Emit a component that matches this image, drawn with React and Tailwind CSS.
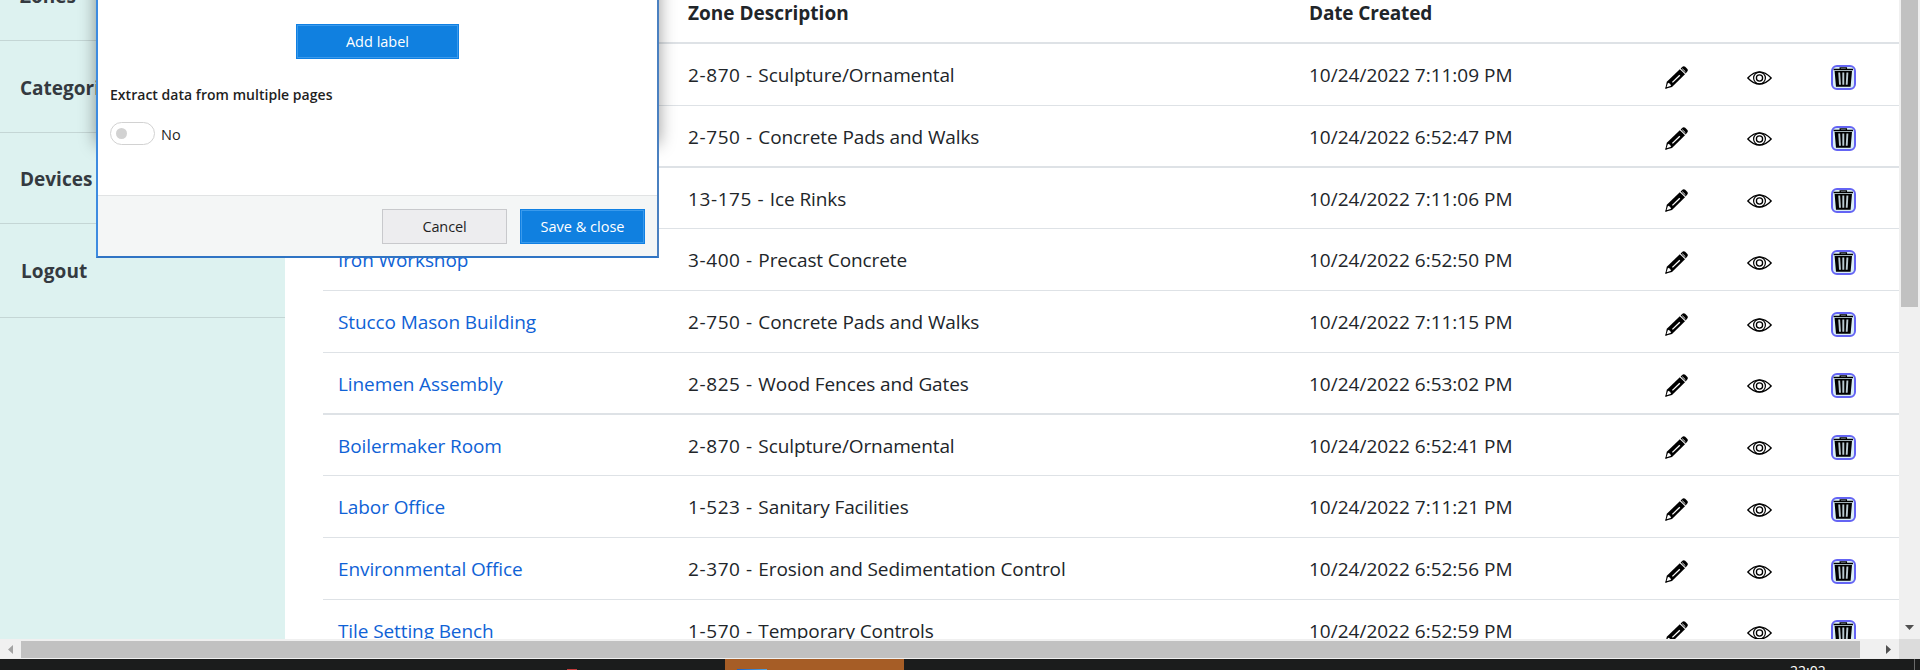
const rows = [
  { name: '', code: '2-870 - ', desc: 'Sculpture/Ornamental', date: '10/24/2022 7:11:09 PM', h: 'h-[62px] border-b', icons: 'mt-0' },
  { name: '', code: '2-750 - ', desc: 'Concrete Pads and Walks', date: '10/24/2022 6:52:47 PM', h: 'h-[62px] border-b-2', icons: '-mt-px' },
  { name: '', code: '13-175 - ', desc: 'Ice Rinks', date: '10/24/2022 7:11:06 PM', h: 'h-[61px] border-b', icons: '-mt-px' },
  { name: 'Iron Workshop', code: '3-400 - ', desc: 'Precast Concrete', date: '10/24/2022 6:52:50 PM', h: 'h-[62px] border-b', icons: 'mt-0' },
  { name: 'Stucco Mason Building', code: '2-750 - ', desc: 'Concrete Pads and Walks', date: '10/24/2022 7:11:15 PM', h: 'h-[62px] border-b', icons: 'mt-0' },
  { name: 'Linemen Assembly', code: '2-825 - ', desc: 'Wood Fences and Gates', date: '10/24/2022 6:53:02 PM', h: 'h-[62px] border-b-2', icons: '-mt-px' },
  { name: 'Boilermaker Room', code: '2-870 - ', desc: 'Sculpture/Ornamental', date: '10/24/2022 6:52:41 PM', h: 'h-[61px] border-b', icons: '-mt-px' },
  { name: 'Labor Office', code: '1-523 - ', desc: 'Sanitary Facilities', date: '10/24/2022 7:11:21 PM', h: 'h-[62px] border-b', icons: 'mt-0' },
  { name: 'Environmental Office', code: '2-370 - ', desc: 'Erosion and Sedimentation Control', date: '10/24/2022 6:52:56 PM', h: 'h-[62px] border-b', icons: 'mt-0' },
  { name: 'Tile Setting Bench', code: '1-570 - ', desc: 'Temporary Controls', date: '10/24/2022 6:52:59 PM', h: 'h-[62px] border-b', icons: '-mt-px' },
];

function Pencil() {
  return (
    <svg width="23" height="23" viewBox="0 0 23 23">
      <path d="M0.3 22.7 L1.8 15.8 L14.8 3.2 L20 8.2 L7 21 Z" fill="#000" />
      <path d="M15.6 2.6 L17.8 0.6 Q19 -0.2 20.2 0.8 L22.4 3.1 Q23.2 4.2 22.4 5.3 L20.7 7.4 Z" fill="#000" />
      <path d="M1.5 21.3 L3 16.8 Q5.6 17.2 6.1 19.8 Z" fill="#fff" />
      <path d="M0.3 22.7 L1 20.4 L2.5 22 Z" fill="#000" />
      <path d="M7.4 16.4 L14.8 9.2" stroke="#fff" strokeWidth="1.3" />
      <path d="M17.2 2.7 L20.4 5.8" stroke="#fff" strokeWidth="0.9" />
    </svg>
  );
}

function Eye() {
  return (
    <svg width="25" height="14" viewBox="0 0 25 14" fill="none" stroke="#000">
      <path d="M0.8 7 Q12.5 -5.4 24.2 7 Q12.5 19.4 0.8 7Z" strokeWidth="1.3" />
      <circle cx="12.5" cy="7" r="5.9" strokeWidth="1.2" />
      <circle cx="12.5" cy="7" r="3.1" strokeWidth="1.3" />
    </svg>
  );
}

function Trash() {
  return (
    <span className="block h-[25px] w-[25px] rounded-[6px] border-2 border-[#6464f4] bg-[#d9edf5]">
      <svg width="21" height="21" viewBox="0 0 21 21">
        <path d="M7.2 2.2 V0.9 H13.4 V2.2" fill="none" stroke="#000" strokeWidth="1.3" />
        <path d="M0.6 1.8 H20 V3.3 H0.6Z M1.6 4 H19 L17.6 19.8 H3Z" fill="#000" />
        <path d="M6.2 5.5 L7 17.8 M10.3 5.5 V17.8 M14.4 5.5 L13.7 17.8" stroke="#b9c9d0" strokeWidth="1.9" />
      </svg>
    </span>
  );
}

function Sidebar() {
  return (
    <nav className="w-[285px] shrink-0 bg-[#ddf2f0] text-[19px] leading-6 font-bold text-[#343a40]">
      <div className="flex h-[41px] border-b border-[#c4d6d5] pl-5"><span className="-mt-4">Zones</span></div>
      <div className="flex h-[92px] items-center border-b border-[#c4d6d5] pt-[2px] pl-5">Categories</div>
      <div className="flex h-[91px] items-center border-b border-[#c4d6d5] pt-[2px] pl-5">Devices</div>
      <div className="flex h-[94px] items-center border-b border-[#c4d6d5] pl-[21px] tracking-[0.1px]">Logout</div>
    </nav>
  );
}

function ZoneTable() {
  return (
    <main className="w-[1614px] shrink-0 overflow-hidden pl-[38px] text-[19px] leading-6 text-[#212529]">
      <div className="flex h-11 border-b-2 border-[#dee2e6] pt-px font-bold">
        <div className="w-[365px] shrink-0" />
        <div className="w-[621px] shrink-0">Zone Description</div>
        <div className="tracking-[-0.15px]">Date Created</div>
      </div>
      {rows.map((r, i) => (
        <div key={i} className={`flex items-start border-[#dee2e6] pt-[19px] ${r.h}`}>
          <div className="w-[365px] shrink-0 pl-[15px] tracking-[-0.1px] text-[#0f62d6]">{r.name}</div>
          <div className="w-[621px] shrink-0 tracking-[-0.1px] whitespace-pre"><span className="tracking-[0.6px]">{r.code}</span>{r.desc}</div>
          <div className="w-[356px] shrink-0">{r.date}</div>
          <div className={`flex ${r.icons}`}>
            <div className="w-[82px] shrink-0 pt-[3px]"><Pencil /></div>
            <div className="w-[84px] shrink-0 pt-[8px]"><Eye /></div>
            <div className="shrink-0 pt-[2px]"><Trash /></div>
          </div>
        </div>
      ))}
    </main>
  );
}

function Dialog() {
  return (
    <div className="absolute top-0 left-24 h-[258px] w-[563px]">
      <div className="absolute -top-5 left-0 h-[164px] w-full shadow-[0_0_16px_rgba(0,0,0,0.4)]" />
      <div className="relative flex h-full flex-col border-x-2 border-b-2 border-r-[#4a80c0] border-b-[#2f74c4] border-l-[#3d8be0] bg-white text-[14.5px] text-[#1f1f1f]">
        <div className="flex h-[195px] flex-col">
          <button className="mt-6 ml-[198px] h-[35px] w-[163px] shrink-0 border border-[#1080e3] bg-[#1080e0] text-white outline-1 -outline-offset-2 outline-[#3a9aec]">Add label</button>
          <div className="mt-[26px] ml-3 text-[14px] leading-5 font-semibold tracking-[0.03px]">Extract data from multiple pages</div>
          <div className="mt-[17px] ml-3 flex items-center gap-[6px]">
            <span className="flex h-[23px] w-[45px] items-center rounded-full border border-[#d2d2d2] pl-[5px]">
              <span className="h-[11px] w-[11px] rounded-full bg-[#d2d2d2]" />
            </span>
            <span className="pt-[2px] leading-5">No</span>
          </div>
        </div>
        <div className="flex flex-1 items-start justify-end gap-[13px] border-t border-[#e1e3e4] bg-[#f4f6f6] pt-[13px] pr-3">
          <button className="h-[35px] w-[125px] border border-[#c8c9cc] bg-[#ededef] tracking-[-0.1px]">Cancel</button>
          <button className="h-[35px] w-[125px] border border-[#1080e3] bg-[#1080e0] text-white outline-1 -outline-offset-2 outline-[#3a9aec]">Save &amp; close</button>
        </div>
      </div>
    </div>
  );
}

function VerticalScrollbar() {
  return (
    <div className="flex w-[21px] shrink-0 flex-col items-center justify-between bg-[#f0f0f0] pb-[9px]">
      <div className="h-[307px] w-[17px] bg-[#c1c1c1]" />
      <svg width="9" height="5" viewBox="0 0 9 5"><path d="M0 0H9L4.5 5Z" fill="#505050" /></svg>
    </div>
  );
}

function HorizontalScrollbar() {
  return (
    <div className="flex h-5 shrink-0 bg-[#f0f0f0]">
      <div className="flex w-[1899px] items-center">
        <svg className="ml-2" width="5" height="9" viewBox="0 0 5 9"><path d="M5 0V9L0 4.5Z" fill="#a3a3a3" /></svg>
        <div className="ml-2 h-[17px] w-[1839px] bg-[#c1c1c1]" />
        <svg className="ml-[26px]" width="5" height="9" viewBox="0 0 5 9"><path d="M0 0V9L5 4.5Z" fill="#505050" /></svg>
      </div>
      <div className="w-[21px] bg-[#dcdcdc]" />
    </div>
  );
}

function Taskbar() {
  return (
    <footer className="flex h-[11px] shrink-0 items-end overflow-hidden bg-[#1b1c1c]">
      <div className="ml-[567px] h-px w-2.5 bg-[#c43c3c]" />
      <div className="ml-[148px] flex h-full w-[179px] items-end bg-[#a65d26] pl-3">
        <div className="h-px w-[30px] bg-linear-to-r from-[#1d5fc0] to-[#56a5e0]" />
      </div>
      <div className="ml-[886px] h-full w-[124px] pt-[4px] text-[14px] leading-4 text-white">22:02</div>
      <div className="h-full w-px bg-[#6a6a6a]" />
    </footer>
  );
}

export default function App() {
  return (
    <div className="relative flex h-[670px] w-[1920px] flex-col overflow-hidden bg-white font-['Open_Sans','Noto_Sans',sans-serif]">
      <div className="flex h-[639px] shrink-0 overflow-hidden">
        <Sidebar />
        <ZoneTable />
        <VerticalScrollbar />
      </div>
      <HorizontalScrollbar />
      <Taskbar />
      <Dialog />
    </div>
  );
}
